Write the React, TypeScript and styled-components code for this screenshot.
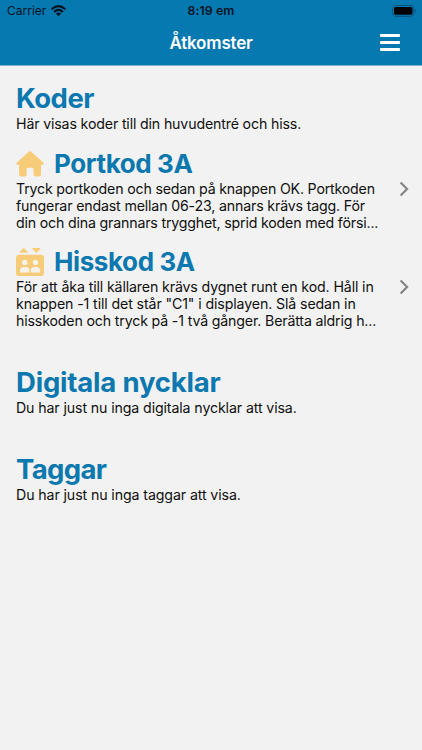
import React from "react";
import styled, { createGlobalStyle } from "styled-components";

const GlobalStyle = createGlobalStyle`
  * { box-sizing: border-box; }
  body {
    margin: 0;
    background: #f2f2f2;
    font-family: Inter, "Liberation Sans", sans-serif;
  }
`;

const Screen = styled.div`
  width: 422px;
  height: 750px;
  overflow: hidden;
  background: #f2f2f2;
`;

const Header = styled.header`
  height: 66px;
  background: #0779b1;
  border-bottom: 1px solid #7fb3d0;
`;

const StatusBar = styled.div`
  display: grid;
  grid-template-columns: 1fr auto 1fr;
  align-items: center;
  height: 21px;
  padding: 0 5px 0 7px;
  color: #04121d;
`;

const Carrier = styled.div`
  display: flex;
  align-items: center;
  gap: 5px;
  font-size: 12px;
  letter-spacing: 0;
`;

const Clock = styled.div`
  margin-right: 2px;
  font-size: 12.3px;
  font-weight: 600;
  letter-spacing: 0.1px;
`;

const BatterySlot = styled.div`
  display: flex;
  justify-content: flex-end;
`;

const NavBar = styled.div`
  display: grid;
  grid-template-columns: 1fr auto 1fr;
  align-items: center;
  height: 43px;
  padding: 0 22px;
`;

const NavTitle = styled.h1`
  grid-column: 2;
  margin: 0;
  color: #fff;
  font-size: 17px;
  font-weight: 600;
  letter-spacing: -0.2px;
`;

const MenuButton = styled.button`
  display: flex;
  flex-direction: column;
  justify-self: end;
  gap: 4px;
  padding: 0;
  border: 0;
  background: none;
`;

const MenuBar = styled.span`
  width: 20px;
  height: 3px;
  border-radius: 1px;
  background: #fff;
`;

const Content = styled.main`
  padding: 15px 12px 0 16px;
`;

const Section = styled.section<{ $gap: number }>`
  margin-bottom: ${(p) => p.$gap}px;
`;

const Title = styled.h2<{ $spacing: number; $size?: number }>`
  margin: 0;
  height: 34px;
  color: #0c78b0;
  font-size: ${(p) => p.$size ?? 27.5}px;
  font-weight: 700;
  line-height: 34px;
  letter-spacing: ${(p) => p.$spacing}px;
  white-space: nowrap;
`;

const Line = styled.div<{ $spacing: number }>`
  height: 17.25px;
  color: #101010;
  font-size: 14.2px;
  line-height: 17.25px;
  letter-spacing: ${(p) => p.$spacing}px;
  white-space: nowrap;
`;

const CodeRow = styled.article<{ $gap: number }>`
  display: flex;
  align-items: center;
  justify-content: space-between;
  margin-bottom: ${(p) => p.$gap}px;
`;

const CodeHeading = styled.div`
  display: flex;
  align-items: center;
  gap: 10px;
  height: 32.75px;
  padding-top: 2px;
`;

const HouseIcon = () => (
  <svg width="28" height="26" viewBox="0 0 28 26" fill="#f7cc78">
    <path d="M13 .6Q14 -.1 15 .6L27.4 11.8Q28.3 13.5 26.8 13.8H25V23.2Q25 25.5 22.8 25.5H19.4Q17.6 25.5 17.6 23.7V18.3Q17.6 16.7 16 16.7H12.2Q10.6 16.7 10.6 18.3V23.7Q10.6 25.5 8.8 25.5H5.2Q3.1 25.5 3.1 23.2V13.8H1.2Q-.3 13.5 .6 11.8Z" />
  </svg>
);

const ElevatorIcon = () => (
  <svg width="28" height="28" viewBox="0 0 28 28">
    <path d="M3.8 4.8Q3 4.4 3.7 3.7L7 .5Q7.7 0 8.4 .5L11.7 3.7Q12.2 4.4 11.5 4.8ZM16.7 0H24Q24.8 .4 24.2 1.1L21 4.3Q20.3 4.9 19.6 4.3L16.4 1.1Q15.9 .4 16.7 0Z" fill="#f7cc78" />
    <rect x="0" y="6.8" width="28" height="21.2" rx="3" fill="#f7cc78" />
    <g fill="#f7f3ea">
      <circle cx="8.8" cy="14.5" r="2.7" />
      <circle cx="19.5" cy="14.5" r="2.7" />
      <path d="M4 24.1V22.7Q4.2 19 7.6 19H10Q13.3 19 13.5 22.7V24.1Q13.5 24.6 13 24.6H4.5Q4 24.6 4 24.1ZM14.8 24.1V22.7Q15 19 18.3 19H20.7Q24 19 24.2 22.7V24.1Q24.2 24.6 23.7 24.6H15.3Q14.8 24.6 14.8 24.1Z" />
    </g>
  </svg>
);

const Chevron = () => (
  <svg width="12" height="16" viewBox="0 0 12 16" fill="none" stroke="#858585" strokeWidth="2.2">
    <path d="M2.6 1.5L9.1 8L2.6 14.5" />
  </svg>
);

const WifiIcon = () => (
  <svg width="15" height="12" viewBox="0 0 15 12" fill="none" stroke="#04121d" strokeWidth="2">
    <path d="M.7 4.3Q7.5 -2 14.3 4.3M3.1 6.9Q7.5 2.8 11.9 6.9" />
    <path d="M4.9 8.6Q7.5 6.4 10.1 8.6L7.5 11.3Z" fill="#04121d" stroke="none" />
  </svg>
);

const BatteryIcon = () => (
  <svg width="25" height="12" viewBox="0 0 25 12">
    <rect x=".5" y=".5" width="21.5" height="10.8" rx="3" fill="none" stroke="#07517a" />
    <rect x="2" y="2" width="18.5" height="7.8" rx="1.7" fill="#000" />
    <path d="M23.3 4Q24.8 5.8 23.3 7.7Z" fill="#07456a" />
  </svg>
);

type TextLine = { text: string; spacing: number };

const codes: { title: string; spacing: number; icon: React.ReactNode; gap: number; lines: TextLine[] }[] = [
  {
    title: "Portkod 3A",
    spacing: -0.4,
    icon: <HouseIcon />,
    gap: 13.5,
    lines: [
      { text: "Tryck portkoden och sedan på knappen OK. Portkoden", spacing: -0.19 },
      { text: "fungerar endast mellan 06-23, annars krävs tagg. För", spacing: -0.165 },
      { text: "din och dina grannars trygghet, sprid koden med försi...", spacing: -0.185 },
    ],
  },
  {
    title: "Hisskod 3A",
    spacing: -0.4,
    icon: <ElevatorIcon />,
    gap: 35.25,
    lines: [
      { text: "För att åka till källaren krävs dygnet runt en kod. Håll in", spacing: -0.135 },
      { text: "knappen -1 till det står \"C1\" i displayen. Slå sedan in", spacing: -0.12 },
      { text: "hisskoden och tryck på -1 två gånger. Berätta aldrig h...", spacing: -0.165 },
    ],
  },
];

export default function App() {
  return (
    <>
      <GlobalStyle />
      <Screen>
        <Header>
          <StatusBar>
            <Carrier>Carrier <WifiIcon /></Carrier>
            <Clock>8:19 em</Clock>
            <BatterySlot><BatteryIcon /></BatterySlot>
          </StatusBar>
          <NavBar>
            <NavTitle>Åtkomster</NavTitle>
            <MenuButton aria-label="Meny"><MenuBar /><MenuBar /><MenuBar /></MenuButton>
          </NavBar>
        </Header>
        <Content>
          <Section $gap={14.5}>
            <Title $spacing={-0.5}>Koder</Title>
            <Line $spacing={-0.16}>Här visas koder till din huvudentré och hiss.</Line>
          </Section>
          {codes.map((code) => (
            <CodeRow key={code.title} $gap={code.gap}>
              <div>
                <CodeHeading>
                  {code.icon}
                  <Title $spacing={code.spacing} $size={26}>{code.title}</Title>
                </CodeHeading>
                {code.lines.map((line) => (
                  <Line key={line.text} $spacing={line.spacing}>{line.text}</Line>
                ))}
              </div>
              <Chevron />
            </CodeRow>
          ))}
          <Section $gap={35.75}>
            <Title $spacing={-0.2}>Digitala nycklar</Title>
            <Line $spacing={-0.12}>Du har just nu inga digitala nycklar att visa.</Line>
          </Section>
          <Section $gap={0}>
            <Title $spacing={-0.65}>Taggar</Title>
            <Line $spacing={-0.11}>Du har just nu inga taggar att visa.</Line>
          </Section>
        </Content>
      </Screen>
    </>
  );
}
